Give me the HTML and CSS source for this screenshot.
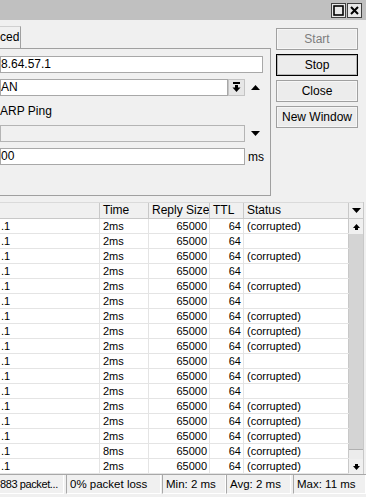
FILE: index.html
```
<!DOCTYPE html>
<html lang="en">
<head>
    <meta charset="UTF-8">
    <meta name="viewport" content="width=device-width, initial-scale=1.0">
    <title>Ping</title>
    <link rel="stylesheet" href="styles.css">
</head>
<body>
    <div class="titlebar">
        <span class="tb-btn">
            <svg width="11" height="11" viewBox="0 0 11 11"><rect x="1" y="1" width="9" height="9" fill="none" stroke="#000" stroke-width="1.6"/></svg>
        </span>
        <span class="tb-btn">
            <svg width="11" height="11" viewBox="0 0 11 11"><path d="M2 2 L9 9 M9 2 L2 9" stroke="#000" stroke-width="2"/></svg>
        </span>
    </div>

    <div class="top">
        <div class="left">
            <div class="tabs">
                <div class="tab">ced</div>
            </div>
            <div class="panel">
                <div class="frow">
                    <div class="field w-long">8.64.57.1</div>
                </div>
                <div class="frow">
                    <div class="field w-short">AN</div>
                    <div class="drop">
                        <svg width="9" height="11" viewBox="0 0 9 11"><rect x="1" y="0" width="7" height="2" fill="#000"/><rect x="3" y="3" width="3" height="3" fill="#000"/><path d="M0.5 5.5 H8.5 L4.5 10 Z" fill="#000"/></svg>
                    </div>
                    <span class="tri">
                        <svg width="9" height="5" viewBox="0 0 9 5"><path d="M0 5 L4.5 0 L9 5 Z" fill="#000"/></svg>
                    </span>
                </div>
                <div class="frow label">ARP Ping</div>
                <div class="frow">
                    <div class="field w-mid disabled"></div>
                    <span class="tri">
                        <svg width="9" height="5" viewBox="0 0 9 5"><path d="M0 0 L9 0 L4.5 5 Z" fill="#000"/></svg>
                    </span>
                </div>
                <div class="frow">
                    <div class="field w-mid">00</div>
                    <span class="unit">ms</span>
                </div>
            </div>
        </div>
        <div class="actions">
            <button class="btn" disabled>Start</button>
            <button class="btn default">Stop</button>
            <button class="btn">Close</button>
            <button class="btn">New Window</button>
        </div>
    </div>

    <div class="list">
        <div class="cols">
            <div class="lrow head">
                <div class="c c1"></div>
                <div class="c c2">Time</div>
                <div class="c c3">Reply Size</div>
                <div class="c c4">TTL</div>
                <div class="c c5">Status</div>
            </div>
            <div class="lrow"><div class="c c1">.1</div><div class="c c2">2ms</div><div class="c c3 num">65000</div><div class="c c4 num">64</div><div class="c c5">(corrupted)</div></div>
            <div class="lrow"><div class="c c1">.1</div><div class="c c2">2ms</div><div class="c c3 num">65000</div><div class="c c4 num">64</div><div class="c c5"></div></div>
            <div class="lrow"><div class="c c1">.1</div><div class="c c2">2ms</div><div class="c c3 num">65000</div><div class="c c4 num">64</div><div class="c c5">(corrupted)</div></div>
            <div class="lrow"><div class="c c1">.1</div><div class="c c2">2ms</div><div class="c c3 num">65000</div><div class="c c4 num">64</div><div class="c c5"></div></div>
            <div class="lrow"><div class="c c1">.1</div><div class="c c2">2ms</div><div class="c c3 num">65000</div><div class="c c4 num">64</div><div class="c c5">(corrupted)</div></div>
            <div class="lrow"><div class="c c1">.1</div><div class="c c2">2ms</div><div class="c c3 num">65000</div><div class="c c4 num">64</div><div class="c c5"></div></div>
            <div class="lrow"><div class="c c1">.1</div><div class="c c2">2ms</div><div class="c c3 num">65000</div><div class="c c4 num">64</div><div class="c c5">(corrupted)</div></div>
            <div class="lrow"><div class="c c1">.1</div><div class="c c2">2ms</div><div class="c c3 num">65000</div><div class="c c4 num">64</div><div class="c c5">(corrupted)</div></div>
            <div class="lrow"><div class="c c1">.1</div><div class="c c2">2ms</div><div class="c c3 num">65000</div><div class="c c4 num">64</div><div class="c c5">(corrupted)</div></div>
            <div class="lrow"><div class="c c1">.1</div><div class="c c2">2ms</div><div class="c c3 num">65000</div><div class="c c4 num">64</div><div class="c c5"></div></div>
            <div class="lrow"><div class="c c1">.1</div><div class="c c2">2ms</div><div class="c c3 num">65000</div><div class="c c4 num">64</div><div class="c c5">(corrupted)</div></div>
            <div class="lrow"><div class="c c1">.1</div><div class="c c2">2ms</div><div class="c c3 num">65000</div><div class="c c4 num">64</div><div class="c c5"></div></div>
            <div class="lrow"><div class="c c1">.1</div><div class="c c2">2ms</div><div class="c c3 num">65000</div><div class="c c4 num">64</div><div class="c c5">(corrupted)</div></div>
            <div class="lrow"><div class="c c1">.1</div><div class="c c2">2ms</div><div class="c c3 num">65000</div><div class="c c4 num">64</div><div class="c c5">(corrupted)</div></div>
            <div class="lrow"><div class="c c1">.1</div><div class="c c2">2ms</div><div class="c c3 num">65000</div><div class="c c4 num">64</div><div class="c c5">(corrupted)</div></div>
            <div class="lrow"><div class="c c1">.1</div><div class="c c2">8ms</div><div class="c c3 num">65000</div><div class="c c4 num">64</div><div class="c c5">(corrupted)</div></div>
            <div class="lrow"><div class="c c1">.1</div><div class="c c2">2ms</div><div class="c c3 num">65000</div><div class="c c4 num">64</div><div class="c c5">(corrupted)</div></div>
        </div>
        <div class="vscroll">
            <div class="sc-head">
                <svg width="9" height="5" viewBox="0 0 9 5"><path d="M0 0 L9 0 L4.5 5 Z" fill="#000"/></svg>
            </div>
            <div class="sc-arrow">
                <svg width="7" height="6" viewBox="0 0 7 6"><path d="M0 4 L3.5 0 L7 4 Z" fill="#000"/><rect x="2" y="4" width="3" height="2" fill="#000"/></svg>
            </div>
            <div class="sc-track"></div>
            <div class="sc-thumb"></div>
            <div class="sc-arrow">
                <svg width="7" height="6" viewBox="0 0 7 6"><rect x="2" y="0" width="3" height="2" fill="#000"/><path d="M0 2 L7 2 L3.5 6 Z" fill="#000"/></svg>
            </div>
        </div>
    </div>

    <div class="statusbar">
        <div class="cell s1">883 packet...</div>
        <div class="cell s2">0% packet loss</div>
        <div class="cell s3">Min: 2 ms</div>
        <div class="cell s4">Avg: 2 ms</div>
        <div class="cell s5">Max: 11 ms</div>
    </div>
</body>
</html>
```

FILE: styles.css
```
body {
    margin: 0;
    width: 366px;
    height: 497px;
    overflow: hidden;
    background: #f0f0f0;
    font-family: "Liberation Sans", Arial, sans-serif;
    font-size: 11px;
    color: #000;
}
.titlebar {
    height: 20px;
    background: #c0c0c0;
    display: flex;
    justify-content: flex-end;
    align-items: flex-start;
    padding: 3px 4px 0 0;
    box-sizing: border-box;
    gap: 1px;
}
.tb-btn {
    width: 15px;
    height: 15px;
    box-sizing: border-box;
    border: 1px solid #404040;
    background: #e8e8e8;
    display: flex;
    align-items: center;
    justify-content: center;
}
.top {
    display: flex;
    margin-top: 6px;
}
.left {
    width: 271px;
}
.tabs {
    height: 22px;
    display: flex;
}
.tab {
    width: 21px;
    box-sizing: border-box;
    border-top: 1px solid #d0d0d0;
    border-right: 1px solid #a0a0a0;
    line-height: 21px;
    font-size: 12px;
    overflow: hidden;
}
.panel {
    height: 148px;
    box-sizing: border-box;
    border-top: 1px solid #a0a0a0;
    border-right: 1px solid #a0a0a0;
    border-bottom: 1px solid #a0a0a0;
    padding-top: 7px;
    display: flex;
    flex-direction: column;
    gap: 6px;
}
.frow {
    display: flex;
    align-items: center;
    height: 17px;
}
.frow.label {
    font-size: 12px;
}
.field {
    height: 17px;
    box-sizing: border-box;
    border: 1px solid #a8a8a8;
    background: #fff;
    line-height: 15px;
    font-size: 12px;
    padding-left: 0;
    overflow: hidden;
    white-space: nowrap;
}
.field.disabled {
    background: #f0f0f0;
    border-color: #b4b4b4;
}
.w-long { width: 263px; }
.w-short { width: 228px; }
.w-mid { width: 245px; }
.drop {
    width: 17px;
    height: 17px;
    box-sizing: border-box;
    border: 1px solid #c4c4c4;
    background: #e6e6e6;
    display: flex;
    align-items: center;
    justify-content: center;
}
.tri {
    margin-left: 6px;
    display: flex;
}
.unit {
    margin-left: 3px;
    font-size: 12px;
}
.actions {
    margin-left: 5px;
    padding-top: 2px;
    display: flex;
    flex-direction: column;
    gap: 4px;
}
.btn {
    width: 82px;
    height: 22px;
    box-sizing: border-box;
    border: 1px solid #a0a0a0;
    box-shadow: inset 0 0 0 1px #f6f6f6;
    background: #ececec;
    font-family: "Liberation Sans", Arial, sans-serif;
    font-size: 12px;
    color: #000;
    padding: 0;
}
.btn:disabled {
    color: #7d7d7d;
}
.btn.default {
    border-color: #000;
    box-shadow: inset 0 0 0 1px #b8b8b8;
}
.list {
    display: flex;
    margin-top: 6px;
    width: 364px;
    border-right: 1px solid #c8c8c8;
    box-sizing: border-box;
}
.cols {
    width: 349px;
}
.lrow {
    display: flex;
    height: 15px;
    box-sizing: border-box;
    background: #fff;
    border-bottom: 1px solid #e4e4e4;
}
.lrow.head {
    height: 17px;
    background: #f0f0f0;
    border-top: 1px solid #dadada;
    border-bottom: 1px solid #c8c8c8;
}
.c {
    box-sizing: border-box;
    border-right: 1px solid #e4e4e4;
    padding-left: 3px;
    line-height: 14px;
    white-space: nowrap;
    overflow: hidden;
}
.head .c {
    border-right-color: #c8c8c8;
    line-height: 15px;
    font-size: 12px;
}
.c1 { width: 100px; padding-left: 1px; }
.c2 { width: 49px; }
.c3 { width: 61px; }
.c4 { width: 34px; }
.c5 { width: 105px; border-right-color: #c8c8c8; }
.num {
    text-align: right;
    padding-left: 0;
    padding-right: 2px;
}
.vscroll {
    width: 14px;
    display: flex;
    flex-direction: column;
}
.sc-head {
    height: 17px;
    box-sizing: border-box;
    border-top: 1px solid #dadada;
    border-bottom: 1px solid #c8c8c8;
    display: flex;
    align-items: center;
    justify-content: center;
}
.sc-arrow {
    height: 15px;
    background: #f0f0f0;
    display: flex;
    align-items: center;
    justify-content: center;
}
.sc-track {
    flex: 1;
    background: #d4d4d4;
}
.sc-thumb {
    height: 10px;
    box-sizing: border-box;
    border-top: 1px solid #b0b0b0;
    background: #ececec;
}
.statusbar {
    display: flex;
    height: 20px;
    border-top: 1px solid #a8a8a8;
    box-sizing: border-box;
}
.cell {
    box-sizing: border-box;
    border-left: 1px solid #a8a8a8;
    border-right: 1px solid #fff;
    border-bottom: 1px solid #fff;
    line-height: 18px;
    font-size: 11.5px;
    padding-left: 3px;
    white-space: nowrap;
    overflow: hidden;
}
.s1 { width: 64px; border-left: none; padding-left: 0; margin-right: 2px; font-size: 11px; letter-spacing: -0.4px; }
.s2 { width: 95px; margin-right: 1px; }
.s3 { width: 64px; }
.s4 { width: 65px; margin-right: 2px; }
.s5 { flex: 1; }
```
